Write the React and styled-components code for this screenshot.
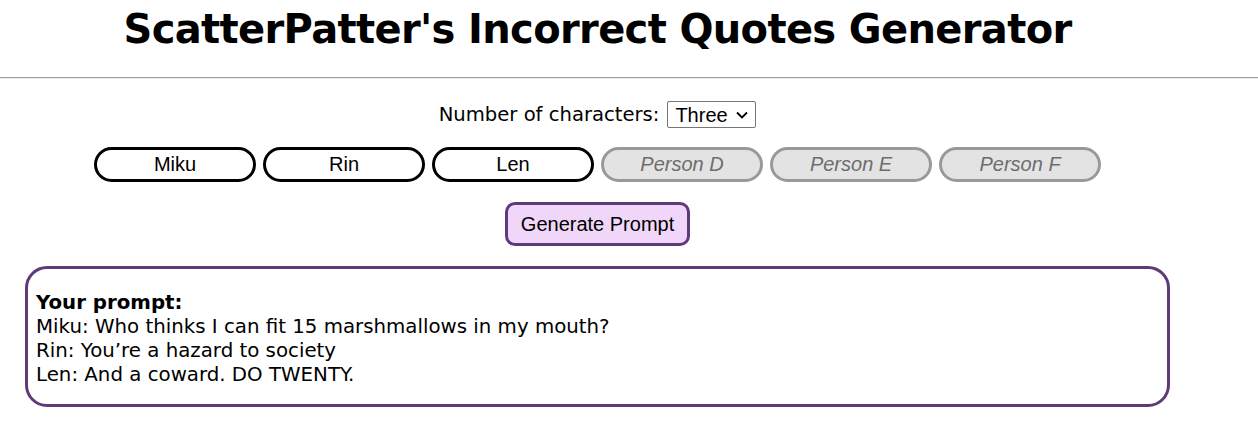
import React from "react";
import styled, { createGlobalStyle } from "styled-components";

const Global = createGlobalStyle`
  html, body { margin: 0; padding: 0; background: #fff; }
  body { font-family: "DejaVu Sans", Verdana, sans-serif; color: #000; }
`;

const Header = styled.header`
  width: 95%;
  display: flex;
  justify-content: center;
  height: 77px;
`;

const Title = styled.h1`
  margin: 7px 0 0;
  font-family: "DejaVu Sans", Tahoma, sans-serif;
  font-weight: bold;
  font-size: 40px;
  line-height: 44px;
  letter-spacing: -0.65px;
`;

const Rule = styled.hr`
  margin: 0;
  border: none;
  border-top: 1px solid #9a9a9a;
  border-bottom: 1px solid #eee;
  height: 0;
`;

const Main = styled.main`
  width: 95%;
  display: flex;
  flex-direction: column;
  align-items: center;
`;

const CountRow = styled.div`
  margin-top: 22px;
  display: flex;
  align-items: center;
  gap: 8px;
  font-size: 19.6px;
`;

const chevron = encodeURIComponent(
  '<svg xmlns="http://www.w3.org/2000/svg" width="12" height="8" viewBox="0 0 12 8"><path d="M1 1.5l5 5 5-5" fill="none" stroke="#000" stroke-width="1.8"/></svg>'
);

const Select = styled.select`
  appearance: none;
  -webkit-appearance: none;
  box-sizing: border-box;
  font-family: "Liberation Sans", Arial, sans-serif;
  font-size: 20px;
  height: 27px;
  width: 89px;
  padding: 0 20px 0 7px;
  border: 1px solid #767676;
  border-radius: 2px;
  background: #fff url("data:image/svg+xml,${chevron}") no-repeat right 7px center;
  color: #000;
`;

const NameRow = styled.div`
  margin-top: 19px;
  display: flex;
  gap: 7px;
`;

const NameInput = styled.input`
  box-sizing: border-box;
  width: 162px;
  height: 35px;
  border-radius: 18px;
  border: 3px solid ${(p) => (p.disabled ? "#999" : "#000")};
  background: ${(p) => (p.disabled ? "#e3e3e3" : "#fff")};
  font-family: "Liberation Sans", Arial, sans-serif;
  font-size: 20px;
  text-align: center;
  color: #000;
  outline: none;
  &::placeholder {
    color: #6d6d6d;
    font-style: italic;
  }
`;

const GenerateButton = styled.button`
  margin-top: 20px;
  box-sizing: border-box;
  height: 44px;
  padding: 0 13px;
  border: 3px solid #5e3a78;
  border-radius: 10px;
  background: #f0d7f9;
  font-family: "Liberation Sans", Arial, sans-serif;
  font-size: 20px;
  color: #000;
`;

const PromptBox = styled.section`
  box-sizing: border-box;
  align-self: stretch;
  margin: 20px 25px 0;
  padding: 22px 8px 17px;
  border: 3px solid #5e3a78;
  border-radius: 22px;
  font-size: 19.8px;
  line-height: 24px;
`;

const PromptLabel = styled.div`
  font-weight: bold;
`;

const characters = ["Miku", "Rin", "Len"];
const placeholders = ["Person D", "Person E", "Person F"];
const lines = [
  "Miku: Who thinks I can fit 15 marshmallows in my mouth?",
  "Rin: You\u2019re a hazard to society",
  "Len: And a coward. DO TWENTY.",
];

export default function App() {
  return (
    <>
      <Global />
      <Header>
        <Title>ScatterPatter's Incorrect Quotes Generator</Title>
      </Header>
      <Rule />
      <Main>
        <CountRow>
          <span>Number of characters:</span>
          <Select defaultValue="3">
            <option value="1">One</option>
            <option value="2">Two</option>
            <option value="3">Three</option>
            <option value="4">Four</option>
            <option value="5">Five</option>
            <option value="6">Six</option>
          </Select>
        </CountRow>
        <NameRow>
          {characters.map((c) => (
            <NameInput key={c} defaultValue={c} />
          ))}
          {placeholders.map((p) => (
            <NameInput key={p} placeholder={p} disabled />
          ))}
        </NameRow>
        <GenerateButton>Generate Prompt</GenerateButton>
        <PromptBox>
          <PromptLabel>Your prompt:</PromptLabel>
          {lines.map((l) => (
            <div key={l}>{l}</div>
          ))}
        </PromptBox>
      </Main>
    </>
  );
}
